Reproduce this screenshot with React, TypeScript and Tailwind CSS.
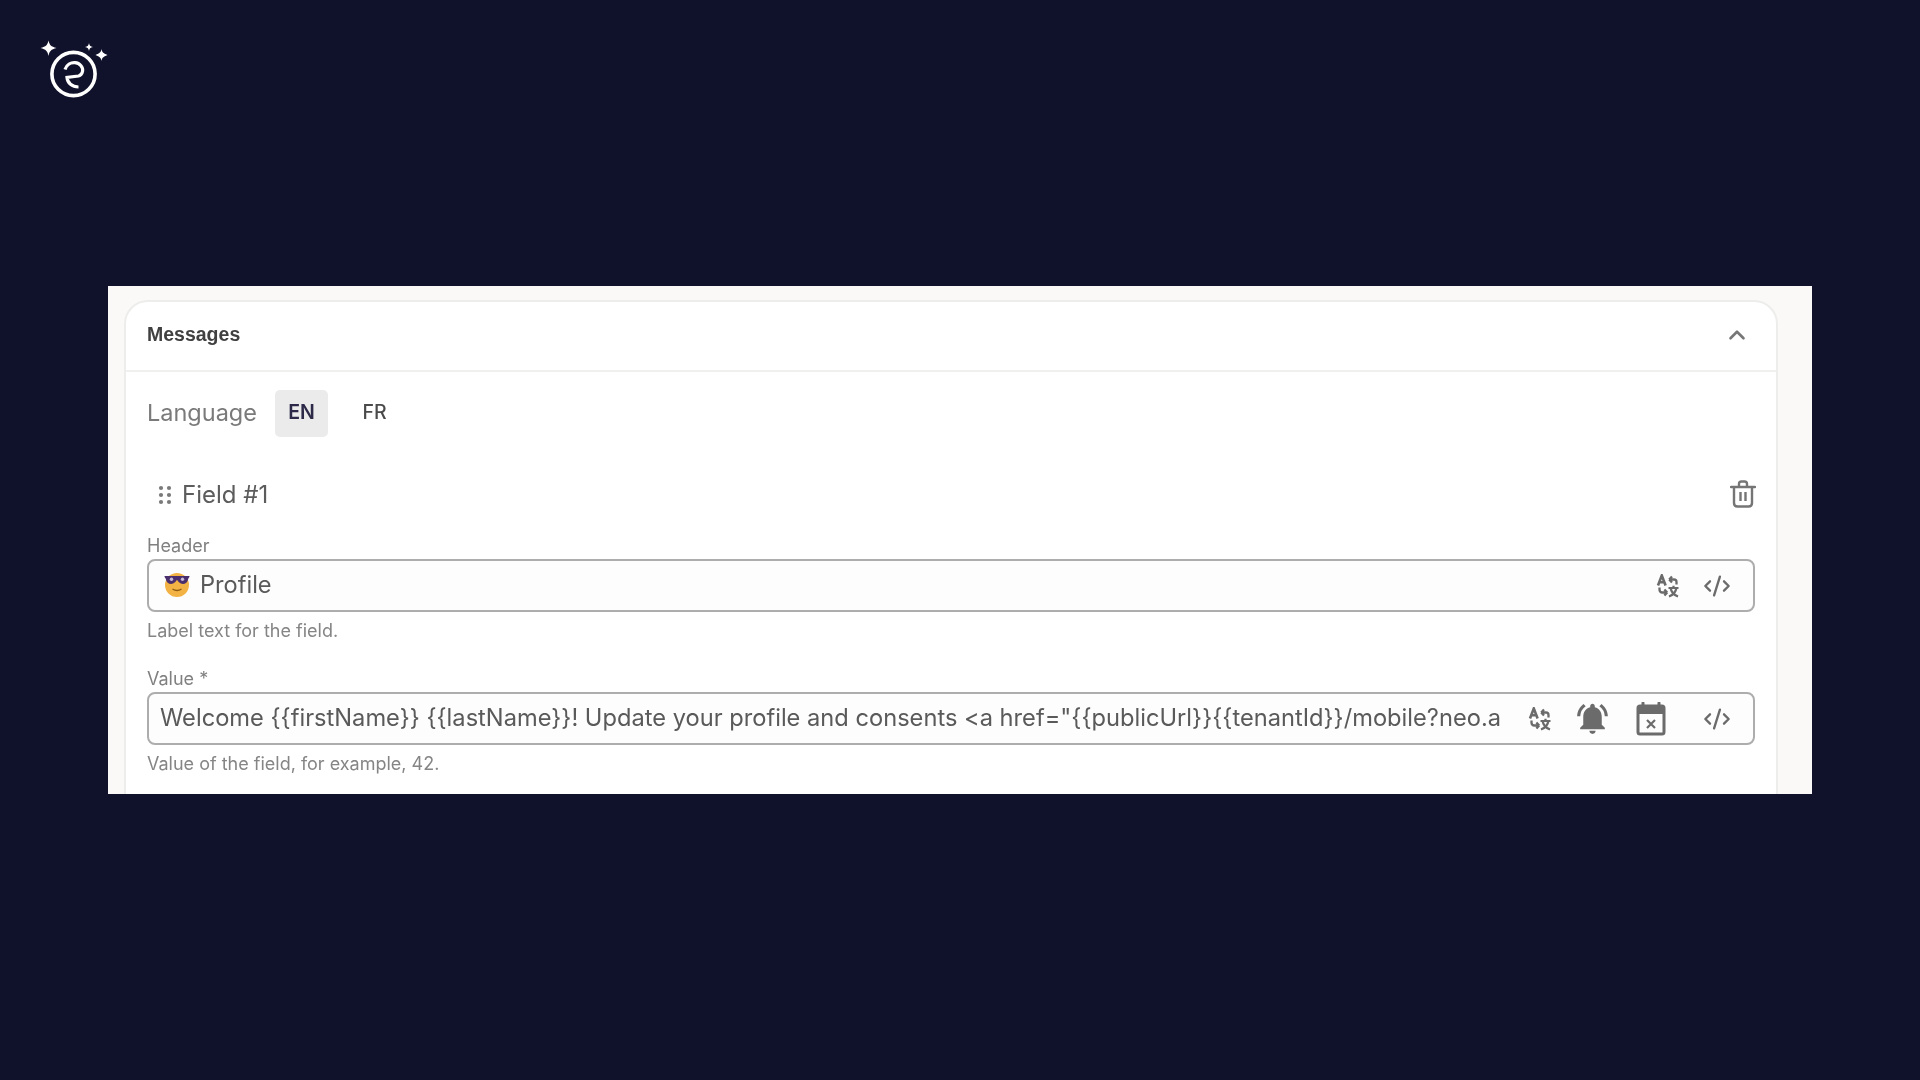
import React from 'react';
import { ChevronUp, CodeXml } from 'lucide-react';
import { MdNotificationsActive } from 'react-icons/md';

// sparkle + ring logo in the top-left corner
function Logo() {
  return (
    <svg width="70" height="60" viewBox="0 0 70 60" fill="none">
      <path d="M8.5 0.5 C9.5 5 11 6.5 16.5 8 C11 9.5 9.5 11 8.5 16 C7.5 11 6 9.5 0.5 8 C6 6.5 7.5 5 8.5 0.5Z" fill="#fff" />
      <path d="M49 3 C49.4 5.5 50.2 6.2 53 7 C50.2 7.8 49.4 8.5 49 11 C48.6 8.5 47.8 7.8 45 7 C47.8 6.2 48.6 5.5 49 3Z" fill="#fff" />
      <path d="M61.5 9 C62 12 63 13.2 67.5 15 C63 16.8 62 18 61.5 21 C61 18 60 16.8 55.5 15 C60 13.2 61 12 61.5 9Z" fill="#fff" />
      <circle cx="33.5" cy="34" r="21.6" stroke="#fff" strokeWidth="3.6" />
      <path d="M25 29.5 C26.5 24.5 31 22.3 35 22.6 C40 23 43.5 27.5 42.5 31.5 C42 34 40.5 35.5 38.5 36 L27 37.5 C27.5 43 32 47 38.5 47" stroke="#fff" strokeWidth="3.2" />
    </svg>
  );
}

// A / 文 with swap arrows, no close match in the icon packs
function TranslateIcon() {
  return (
    <svg width="24" height="24" viewBox="0 0 24 24" fill="none" stroke="#6b6b6b" strokeWidth="2.6">
      <path d="M2 11.5 L5.8 1.5 L9.6 11.5 M3.6 8.2 H8" />
      <path d="M14.5 5.5 H18 Q20.5 5.5 20.5 8 V10.5 M13.2 5.5 L16 2.4 M13.2 5.5 L16 8.6" strokeWidth="2.3" />
      <path d="M10 18.5 H6.5 Q3.5 18.5 3.5 15.5 V13.5 M11.2 18.5 L8.4 15.4 M11.2 18.5 L8.4 21.6" strokeWidth="2.3" />
      <path d="M12.5 14 H22.5 M17.5 11.8 V14 M14.6 14 Q15.5 20 22 22.6 M20.4 14 Q19.5 20 13 22.6" strokeWidth="2.2" />
    </svg>
  );
}

// smiling face with sunglasses
function EmojiIcon() {
  return (
    <svg width="26" height="26" viewBox="0 0 26 26" className="mb-[4px]">
      <circle cx="13" cy="14" r="12" fill="#f3b344" />
      <path d="M0.5 5 H25.5 C25.5 6.5 24.5 7 24.2 8 C23.6 11.5 21.5 13 18.8 13 C16 13 14.2 10.6 13 8.8 C11.8 10.6 10 13 7.2 13 C4.5 13 2.4 11.5 1.8 8 C1.5 7 0.5 6.5 0.5 5Z" fill="#4a2f6e" />
      <circle cx="7.5" cy="8.2" r="1.7" fill="#c9bcd9" />
      <circle cx="18.5" cy="8.2" r="1.7" fill="#c9bcd9" />
      <path d="M8.5 18 Q13 21 17.5 18" stroke="#8f5c12" strokeWidth="1.4" fill="none" />
    </svg>
  );
}

function CalendarX() {
  return (
    <svg width="30" height="34" viewBox="0 0 30 34" fill="none">
      <path d="M7 1 V5 M23 1 V5" stroke="#6b6b6b" strokeWidth="3" strokeLinecap="round" />
      <rect x="2" y="4" width="26" height="28" rx="2" stroke="#6b6b6b" strokeWidth="3" />
      <rect x="2" y="4" width="26" height="8" fill="#6b6b6b" />
      <path d="M11 18 L19 26 M19 18 L11 26" stroke="#6b6b6b" strokeWidth="2.2" />
    </svg>
  );
}

function TrashIcon() {
  return (
    <svg width="26" height="28" viewBox="0 0 26 28" fill="none" stroke="#757575" strokeWidth="2.4" className="mr-[-1px] mb-[3px]">
      <path d="M1 7 H25" strokeLinecap="round" />
      <path d="M9 7 V4 Q9 1.5 11.5 1.5 H14.5 Q17 1.5 17 4 V7" />
      <path d="M4 7 V23 Q4 26.5 7.5 26.5 H18.5 Q22 26.5 22 23 V7" />
      <path d="M10.5 12 V21 M15.5 12 V21" />
    </svg>
  );
}

function GripDots() {
  return (
    <svg width="14" height="20" viewBox="0 0 14 20" fill="#7a7a7a">
      <circle cx="3" cy="3" r="2.1" />
      <circle cx="11" cy="3" r="2.1" />
      <circle cx="3" cy="10" r="2.1" />
      <circle cx="11" cy="10" r="2.1" />
      <circle cx="3" cy="17" r="2.1" />
      <circle cx="11" cy="17" r="2.1" />
    </svg>
  );
}

function IconButton({ children, className }: { children: React.ReactNode; className?: string }) {
  return <span className={`flex items-center justify-center text-[#6b6b6b] ${className ?? ''}`}>{children}</span>;
}

export default function App() {
  return (
    <div className="h-[1080px] bg-[#10112a] overflow-hidden font-['Inter',sans-serif]">
      <div className="pl-10 pt-10 h-[286px]">
        <Logo />
      </div>

      <div className="ml-[108px] w-[1704px] h-[508px] overflow-hidden bg-[#faf9f7] pt-[14px] pl-[16px] pr-[34px]">
        <div className="h-[600px] bg-white border-2 border-[#ededeb] rounded-[24px] blur-[0.4px]">
          {/* Section header */}
          <div className="h-[70px] flex items-center justify-between pl-[21px] pr-[26px] pb-[2px] border-b-2 border-[#f0f0ee]">
            <span className="font-['Liberation_Sans',sans-serif] font-bold text-[19.5px] text-[#404040]">Messages</span>
            <ChevronUp className="w-[26px] h-[26px] text-[#777777]" strokeWidth={2.4} />
          </div>

          <div className="pl-[21px] pr-[21px]">
            {/* Language tabs */}
            <div className="flex items-center h-[46px] mt-[18px]">
              <span className="text-[23.5px] text-[#7a7a7a] mr-[18px]">Language</span>
              <span className="w-[53px] h-[47px] rounded-[5px] bg-[#ebebeb] flex items-center justify-center text-[19.5px] font-semibold text-[#2c2a48]">EN</span>
              <span className="w-[53px] ml-[20px] text-center text-[19.5px] font-medium text-[#4a4a4a]">FR</span>
            </div>

            {/* Field row */}
            <div className="flex items-center justify-between h-[40px] mt-[39px]">
              <div className="flex items-center">
                <span className="w-[34px] pl-[2px] flex justify-center"><GripDots /></span>
                <span className="text-[24px] text-[#5c5c5c] ml-[1px]">Field #1</span>
              </div>
              <TrashIcon />
            </div>

            {/* Header input */}
            <div className="text-[18px] leading-[20px] text-[#808080] mt-[21px]">Header</div>
            <div className="flex items-center h-[53px] mt-[3px] border-2 border-[#adadad] rounded-[8px] bg-[#fdfdfd] pl-[15px] pr-[22px]">
              <EmojiIcon />
              <span className="text-[23.6px] text-[#5a5a5a] ml-[10px] flex-1 pb-[2px]">Profile</span>
              <IconButton className="mr-[23px]"><TranslateIcon /></IconButton>
              <IconButton><CodeXml className="w-[28px] h-[28px]" strokeWidth={2} /></IconButton>
            </div>
            <div className="text-[18px] leading-[20px] text-[#858585] mt-[9px]">Label text for the field.</div>

            {/* Value input */}
            <div className="text-[18px] leading-[20px] text-[#808080] mt-[28px]">Value *</div>
            <div className="flex items-center h-[53px] mt-[3px] border-2 border-[#adadad] rounded-[8px] bg-[#fdfdfd] pl-[11px] pr-[22px]">
              <span className="text-[23.66px] text-[#5a5a5a] flex-1 min-w-0 whitespace-nowrap overflow-hidden pb-[2px]">
                {'Welcome {{firstName}} {{lastName}}! Update your profile and consents <a href="{{publicUrl}}{{tenantId}}/mobile?neo.a'}
              </span>
              <IconButton className="ml-[20px]"><TranslateIcon /></IconButton>
              <IconButton className="ml-[22px]"><MdNotificationsActive className="w-[37px] h-[37px]" /></IconButton>
              <IconButton className="ml-[25px]"><CalendarX /></IconButton>
              <IconButton className="ml-[37px]"><CodeXml className="w-[28px] h-[28px]" strokeWidth={2} /></IconButton>
            </div>
            <div className="text-[18px] leading-[20px] text-[#858585] mt-[9px]">Value of the field, for example, 42.</div>
          </div>
        </div>
      </div>
    </div>
  );
}
